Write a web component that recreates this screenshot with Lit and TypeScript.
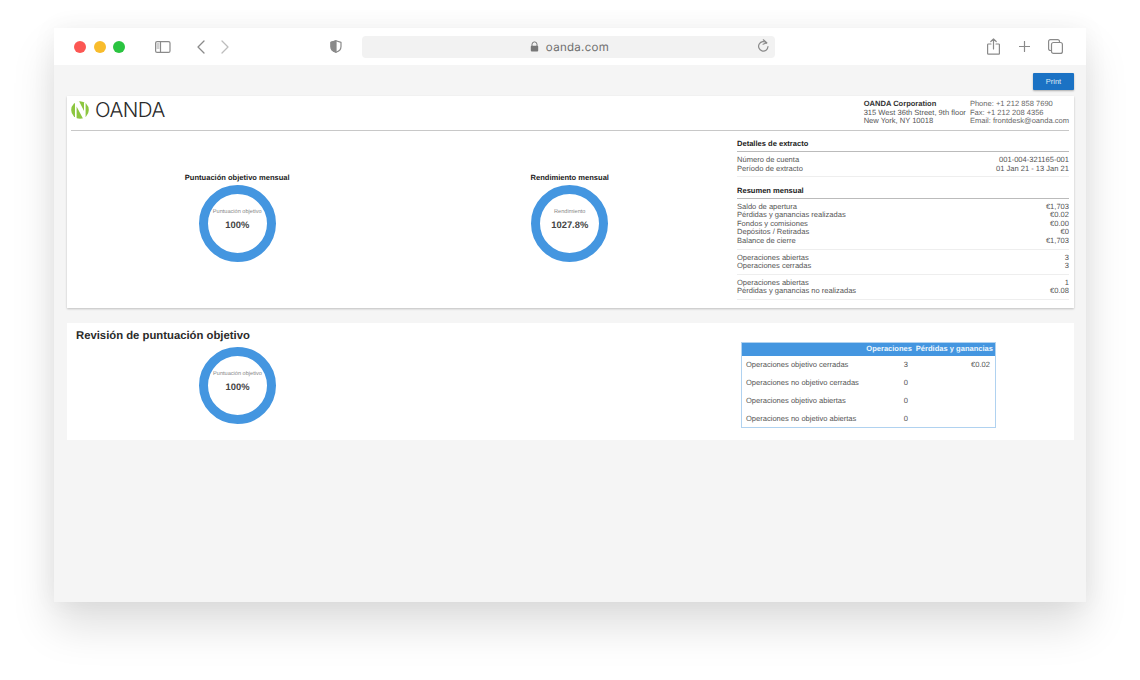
import { LitElement, html, css, svg } from "lit";
import { customElement } from "lit/decorators.js";

const donut = (label: string, value: string) => html`
  <div class="donut">
    <div class="donut-label">${label}</div>
    <div class="donut-value">${value}</div>
  </div>`;

const rows = (items: [string, string][]) => html`
  <div class="group">
    ${items.map(([k, v]) => html`<div class="row"><span>${k}</span><span>${v}</span></div>`)}
  </div>`;

const icon = (w: number, h: number, body: unknown, cls = "") => html`
  <svg class="icon ${cls}" width=${w} height=${h} viewBox="0 0 ${w} ${h}" fill="none" stroke="#8a8a8a" stroke-width="1.2" stroke-linecap="round" stroke-linejoin="round">${body}</svg>`;

@customElement("app-root")
export class AppRoot extends LitElement {
  static styles = css`
    :host { display: block; width: 1140px; height: 680px; background: #fff; overflow: hidden; font-family: "Liberation Sans", Arial, sans-serif; color: #333; text-rendering: geometricPrecision; }
    .window { margin: 28px 0 0 54px; width: 1032px; height: 574px; background: #f5f5f5; box-shadow: 0 24px 44px rgba(0,0,0,.13), 0 0 26px rgba(0,0,0,.05); display: flex; flex-direction: column; border-radius: 3px 3px 0 0; }
    .toolbar { height: 37px; background: #fff; display: flex; align-items: center; flex: none; }
    .dots { display: flex; gap: 7.5px; margin-left: 20px; }
    .dot { width: 12px; height: 12px; border-radius: 50%; }
    .red { background: #fc5753; } .yellow { background: #f8bc2c; } .green { background: #2ac440; }
    .icon { display: block; flex: none; }
    .side { margin-left: 30px; }
    .back { margin-left: 26px; }
    .fwd { margin-left: 16px; }
    .shield { margin-left: 101px; }
    .url { margin-left: 20px; width: 413px; height: 22px; box-sizing: border-box; padding-left: 2px; background: #f2f2f2; border-radius: 4px; display: flex; align-items: center; justify-content: center; position: relative; color: #6e6e6e; gap: 7px; letter-spacing: .3px; font-family: "Inter", "Liberation Sans", sans-serif; font-size: 11.5px; }
    .reload { position: absolute; right: 6px; top: 3px; }
    .share { margin-left: 212px; }
    .plus { margin-left: 19px; }
    .tabs { margin-left: 18px; }
    .content { padding: 8px 12px 0 13px; display: flex; flex-direction: column; }
    .print { align-self: flex-end; width: 41px; height: 17px; border: none; border-radius: 1px; background: #1b72c4; color: #dfeaf5; font: 7.5px "Liberation Sans", Arial, sans-serif; box-shadow: 0 1px 2px rgba(0,0,0,.3); padding: 0; }
    .card { background: #fff; font-size: 7.55px; line-height: 8.5px; }
    .card1 { margin-top: 6px; height: 212px; padding: 0 5px 0 4px; box-shadow: 0 1px 2px rgba(0,0,0,.22); }
    .head { height: 34px; border-bottom: 1px solid #c8c8c8; display: flex; box-sizing: content-box; }
    .logo { display: flex; align-items: center; gap: 6px; height: 27px; margin-top: 0; flex: 1; }
    .wordmark { font: 300 20.5px "Inter", "Liberation Sans", sans-serif; color: #2a2a2a; letter-spacing: -.5px; line-height: 27px; }
    .addr { padding-top: 4px; margin-right: 4px; color: #555; white-space: nowrap; }
    .addr b { color: #333; display: block; }
    .contact { padding-top: 4px; color: #666; white-space: nowrap; }
    .contact div, .addr div { height: 8.5px; }
    .grid { display: grid; grid-template-columns: 332.5px 332.5px 1fr; }
    .chart { display: flex; flex-direction: column; align-items: center; padding-top: 42px; }
    .chart h3 { margin: 0 0 2px; font-size: 7.55px; line-height: 10px; font-weight: 700; color: #222; }
    .donut { width: 77px; height: 77px; box-sizing: border-box; border: 9px solid #4496e0; border-radius: 50%; display: flex; flex-direction: column; align-items: center; padding-top: 14px; }
    .donut-label { font-size: 5.6px; line-height: 8px; color: #888; white-space: nowrap; }
    .donut-value { font-size: 9.4px; line-height: 13px; font-weight: 700; color: #444; margin-top: 2px; }
    .stats { padding: 6px 0 0 1px; color: #555; }
    .stats h4 { margin: 0; font-size: 7.55px; line-height: 13px; padding-bottom: 1px; font-weight: 700; color: #222; border-bottom: 1px solid #bbb; }
    .stats h4.second { margin-top: 6.25px; padding-bottom: 1.3px; }
    .group { padding: 4px 0 3.25px; border-bottom: 1px solid #eee; }
    .row { display: flex; justify-content: space-between; height: 8.5px; white-space: nowrap; }
    .card2 { margin-top: 15px; height: 117px; display: grid; grid-template-columns: 337px 333px 1fr; padding-left: 4px; }
    .review { grid-column: 1 / 3; }
    .review h2 { margin: 0; padding: 7px 0 0 5px; font-size: 11.3px; line-height: 12px; font-weight: 700; color: #2a2a2a; }
    .review .wrap { width: 333px; display: flex; justify-content: center; margin-top: 5px; }
    .tbl { margin: 19px 0 0 0; width: 255px; height: 86px; box-sizing: border-box; border: 1px solid #b0d2f0; font-size: 7.55px; color: #555; }
    .tr { display: grid; grid-template-columns: 123px 47px 81px; align-items: center; height: 18px; white-space: nowrap; }
    .tr > :nth-child(1) { padding-left: 4px; }
    .tr > :nth-child(2), .tr > :nth-child(3) { text-align: right; box-sizing: border-box; }
    .tr > :nth-child(2) { padding-right: 4px; }
    .tr > :nth-child(3) { padding-right: 3px; }
    .thead { height: 13px; background: #4496e0; color: #eef6fd; font-weight: 700; }
    .tr.thead > :nth-child(2) { padding-right: 0; }
    .tr.thead > :nth-child(3) { padding-right: 0; }
  `;

  render() {
    return html`
      <div class="window">
        <div class="toolbar">
          <div class="dots"><div class="dot red"></div><div class="dot yellow"></div><div class="dot green"></div></div>
          ${icon(16, 12, svg`<rect x=".6" y=".6" width="14.4" height="10.8" rx="1.5"/><path d="M5.5.6v10.8"/><path d="M2 3h2M2 5h2M2 7h2" stroke-width=".8"/>`, "side")}
          ${icon(8, 14, svg`<path d="M7 1L1 7l6 6" stroke-width="1.3"/>`, "back")}
          ${icon(8, 14, svg`<path d="M1 1l6 6-6 6" stroke="#bdbdbd" stroke-width="1.3"/>`, "fwd")}
          ${icon(12, 13, svg`<path d="M6 .8l5 1.6v4c0 3-2.3 4.9-5 5.8-2.7-.9-5-2.8-5-5.8v-4z"/><path d="M6 .8l-5 1.6v4c0 3 2.3 4.9 5 5.8z" fill="#8a8a8a"/>`, "shield")}
          <div class="url">
            <svg class="icon" width="9" height="11" viewBox="0 0 9 11"><path d="M2 5V3.4a2.5 2.5 0 015 0V5" fill="none" stroke="#777" stroke-width="1"/><rect x=".8" y="4.8" width="7.4" height="5.6" rx="1" fill="#777"/></svg>
            <span>oanda.com</span>
            ${icon(12, 14, svg`<path d="M9.6 4A4.7 4.7 0 1 0 11 7.5"/><path d="M6.3 .8l3.4 3-3.6 1.4"/>`, "reload")}
          </div>
          ${icon(13, 17, svg`<path d="M4 6H1.4a.8.8 0 00-.8.8v8.6a.8.8 0 00.8.8h10.2a.8.8 0 00.8-.8V6.8a.8.8 0 00-.8-.8H9"/><path d="M6.5 11V1M3.8 3.5L6.5 1l2.7 2.5"/>`, "share")}
          ${icon(11, 11, svg`<path d="M5.5.5v10M.5 5.5h10"/>`, "plus")}
          ${icon(15, 15, svg`<path d="M3 11.5H2.4A1.8 1.8 0 01.6 9.7V2.4A1.8 1.8 0 012.4.6h7.3a1.8 1.8 0 011.8 1.8V3"/><rect x="3.5" y="3.5" width="10.9" height="10.9" rx="2"/>`, "tabs")}
        </div>
        <div class="content">
          <button class="print">Print</button>
          <div class="card card1">
            <div class="head">
              <div class="logo">
                <svg class="icon" width="18" height="18" viewBox="0 0 18 18">
                  <circle cx="9" cy="9" r="8.8" fill="#8cc63f"/>
                  <path d="M4 .8L8 0l5 10V1.2l1.6 1V18h-2.4L5.6 5.6V18H4z" fill="#fff"/>
                </svg>
                <span class="wordmark">OANDA</span>
              </div>
              <div class="addr">
                <b>OANDA Corporation</b>
                <div>315 West 36th Street, 9th floor</div>
                <div>New York, NY 10018</div>
              </div>
              <div class="contact">
                <div>Phone: +1 212 858 7690</div>
                <div>Fax: +1 212 208 4356</div>
                <div>Email: frontdesk@oanda.com</div>
              </div>
            </div>
            <div class="grid">
              <div class="chart"><h3>Puntuación objetivo mensual</h3>${donut("Puntuación objetivo", "100%")}</div>
              <div class="chart"><h3>Rendimiento mensual</h3>${donut("Rendimiento", "1027.8%")}</div>
              <div class="stats">
                <h4>Detalles de extracto</h4>
                ${rows([["Número de cuenta", "001-004-321165-001"], ["Período de extracto", "01 Jan 21 - 13 Jan 21"]])}
                <h4 class="second">Resumen mensual</h4>
                ${rows([["Saldo de apertura", "€1,703"], ["Pérdidas y ganancias realizadas", "€0.02"], ["Fondos y comisiones", "€0.00"], ["Depósitos / Retiradas", "€0"], ["Balance de cierre", "€1,703"]])}
                ${rows([["Operaciones abiertas", "3"], ["Operaciones cerradas", "3"]])}
                ${rows([["Operaciones abiertas", "1"], ["Pérdidas y ganancias no realizadas", "€0.08"]])}
              </div>
            </div>
          </div>
          <div class="card card2">
            <div class="review">
              <h2>Revisión de puntuación objetivo</h2>
              <div class="wrap">${donut("Puntuación objetivo", "100%")}</div>
            </div>
            <div class="tbl">
              <div class="tr thead"><span></span><span>Operaciones</span><span>Pérdidas y ganancias</span></div>
              <div class="tr"><span>Operaciones objetivo cerradas</span><span>3</span><span>€0.02</span></div>
              <div class="tr"><span>Operaciones no objetivo cerradas</span><span>0</span><span></span></div>
              <div class="tr"><span>Operaciones objetivo abiertas</span><span>0</span><span></span></div>
              <div class="tr"><span>Operaciones no objetivo abiertas</span><span>0</span><span></span></div>
            </div>
          </div>
        </div>
      </div>`;
  }
}
